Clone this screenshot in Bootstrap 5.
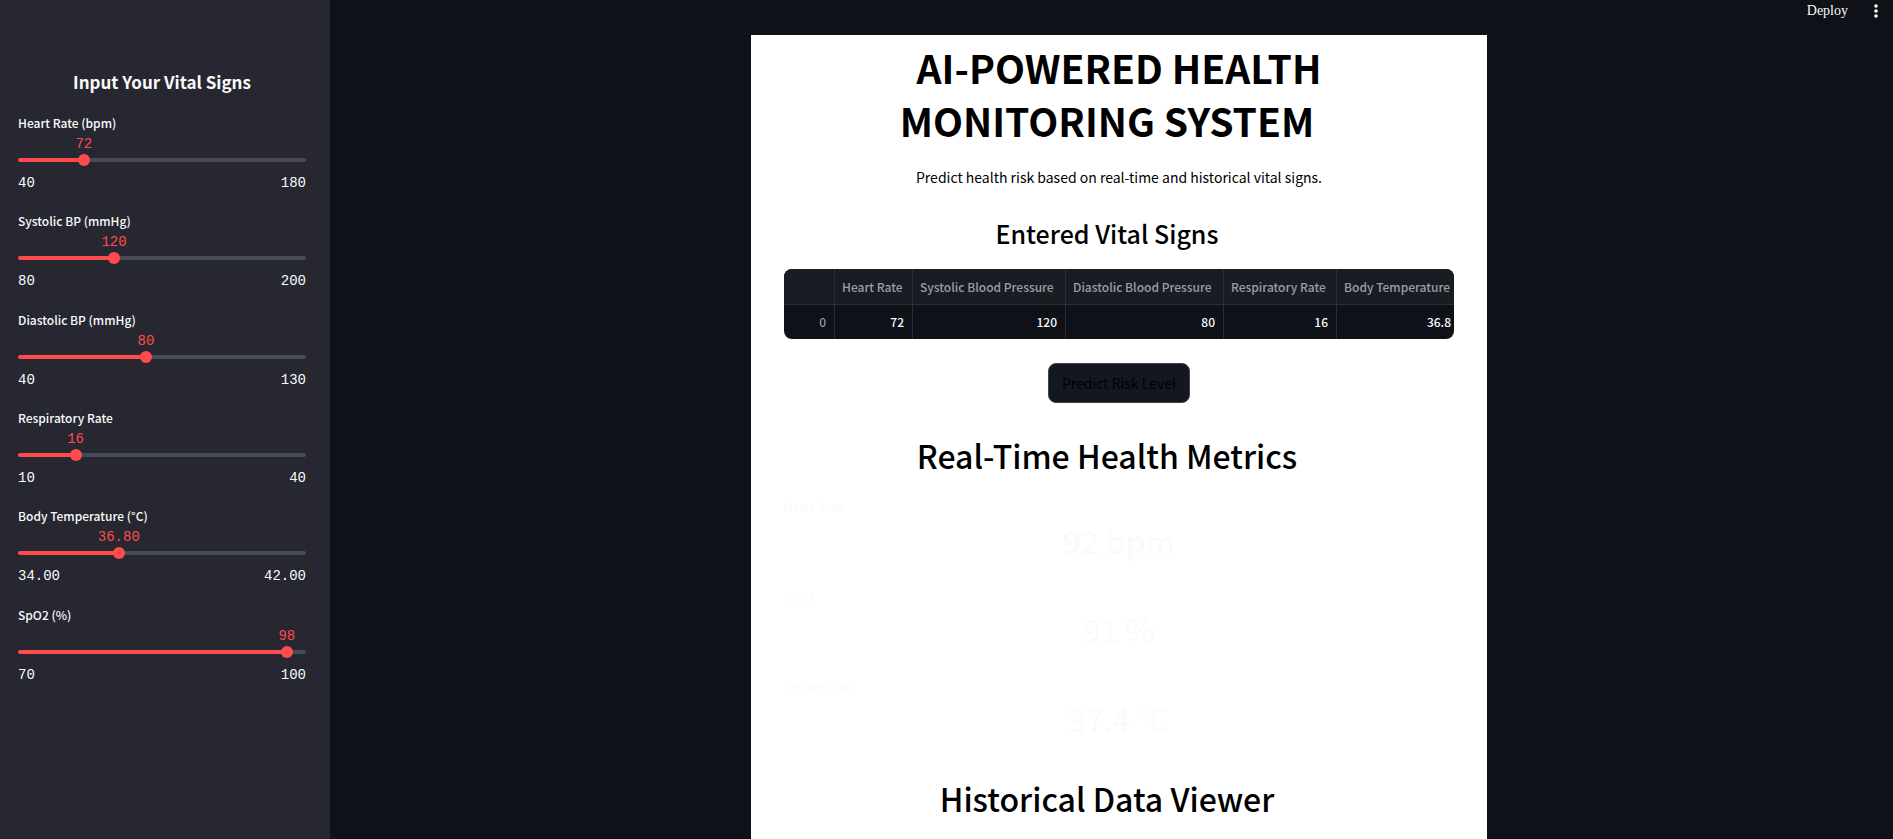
<!DOCTYPE html>
<html lang="en">
<head>
<meta charset="utf-8">
<meta name="viewport" content="width=device-width, initial-scale=1">
<title>AI-Powered Health Monitoring System</title>
<link href="https://cdn.jsdelivr.net/npm/bootstrap@5.3.0/dist/css/bootstrap.min.css" rel="stylesheet">
<style>
  body { background: #0e1117; color: #fafafa; font-family: "Noto Sans CJK SC", "Open Sans", sans-serif; }
  .side-panel { flex: 0 0 330px; background: #262730; padding: 70px 24px 24px 18px; }
  .side-title { font-size: 17px; line-height: 24px; font-weight: 700; margin-bottom: 19px; }
  .slider-list { display: grid; grid-auto-rows: 1fr; min-height: 590px; }
  .slider-label { display: block; font-size: 12px; line-height: 20px; font-weight: 500; }
  .slider-track { height: 4px; margin-top: 25px; border-radius: 2px;
    background: linear-gradient(to right, #ff4b4b var(--fill), #484a55 var(--fill)); }
  .slider-track input { -webkit-appearance: none; appearance: none; position: absolute; top: -4px; left: -6px;
    width: calc(100% + 12px); height: 12px; margin: 0; background: transparent; }
  .slider-track input::-webkit-slider-thumb { -webkit-appearance: none; width: 12px; height: 12px;
    border-radius: 50%; background: #ff4b4b; border: 0; }
  .slider-track output { position: absolute; bottom: 10px; left: var(--fill); transform: translateX(-50%);
    color: #ff4b4b; line-height: 16px; }
  .mono-text { font-family: "Liberation Mono", monospace; font-size: 14px; line-height: 20px; }
  .slider-ends { margin-top: 11px; }

  .main-area { padding-left: 15px; min-width: 0; }
  .top-bar { height: 35px; padding: 0 12px; gap: 23px; }
  .top-bar button { background: none; border: 0; padding: 0; color: #fafafa; line-height: 22px; }
  .deploy-btn { font-family: "Liberation Serif", serif; font-size: 14px; }
  .sheet { width: 100%; max-width: 736px; background: #fff; color: #000; padding: 6px 33px 19px; }
  .sheet h1, .sheet h2, .sheet h3 { margin: 0; }
  .anchor-gap { display: inline-block; width: 24px; }
  .sheet h1 { font-size: 39px; line-height: 53px; font-weight: 700; }
  .sheet .intro { font-size: 14px; line-height: 26px; margin: 17px 0 26px; }
  .sheet h3 { font-size: 25px; line-height: 34px; font-weight: 500; }
  .sheet h2 { font-size: 32px; line-height: 44px; font-weight: 500; }
  .vitals-frame { margin: 19px 0 24px; border-radius: 8px; overflow: hidden; background: #0e1117; }
  .vitals { table-layout: fixed; width: 676px; border-collapse: separate; border-spacing: 0;
    font-size: 12px; line-height: 20px; font-weight: 500; color: #fafafa; }
  .vitals th, .vitals td { height: 34px; padding: 0 8px 0 7px; text-align: right; white-space: nowrap;
    border-right: 1px solid #2c2e34; }
  .vitals th { font-weight: 500; color: #9c9da1; }
  .vitals thead th { height: 36px; background: #1a1c24; border-bottom: 1px solid #2c2e34; text-align: left; }
  .predict-btn { background: #131720; border: 1px solid #41444c; border-radius: 8px; color: #000;
    font-size: 14px; line-height: 26px; padding: 6px 13px; }
  .metrics-title { padding-top: 30px; }
  .metrics dt { font-size: 12px; line-height: 16px; font-weight: 400; color: #fafafa; }
  .metrics dd { font-size: 32px; line-height: 50px; margin: 0 0 23px; text-align: center; color: #fafafa; }
  .metrics { margin: 22px 0 33px; }
</style>
</head>
<body>
<div class="d-flex min-vh-100">
  <aside class="side-panel">
    <h2 class="side-title text-center">Input Your Vital Signs</h2>
    <div class="slider-list">
      <div>
        <label class="slider-label" for="hr">Heart Rate (bpm)</label>
        <div class="slider-track position-relative" style="--fill:22.86%"><output class="mono-text" for="hr">72</output><input type="range" id="hr" min="40" max="180" value="72"></div>
        <div class="slider-ends mono-text d-flex justify-content-between"><span>40</span><span>180</span></div>
      </div>
      <div>
        <label class="slider-label" for="sys">Systolic BP (mmHg)</label>
        <div class="slider-track position-relative" style="--fill:33.33%"><output class="mono-text" for="sys">120</output><input type="range" id="sys" min="80" max="200" value="120"></div>
        <div class="slider-ends mono-text d-flex justify-content-between"><span>80</span><span>200</span></div>
      </div>
      <div>
        <label class="slider-label" for="dia">Diastolic BP (mmHg)</label>
        <div class="slider-track position-relative" style="--fill:44.44%"><output class="mono-text" for="dia">80</output><input type="range" id="dia" min="40" max="130" value="80"></div>
        <div class="slider-ends mono-text d-flex justify-content-between"><span>40</span><span>130</span></div>
      </div>
      <div>
        <label class="slider-label" for="resp">Respiratory Rate</label>
        <div class="slider-track position-relative" style="--fill:20%"><output class="mono-text" for="resp">16</output><input type="range" id="resp" min="10" max="40" value="16"></div>
        <div class="slider-ends mono-text d-flex justify-content-between"><span>10</span><span>40</span></div>
      </div>
      <div>
        <label class="slider-label" for="temp">Body Temperature (°C)</label>
        <div class="slider-track position-relative" style="--fill:35%"><output class="mono-text" for="temp">36.80</output><input type="range" id="temp" min="34" max="42" step="0.1" value="36.8"></div>
        <div class="slider-ends mono-text d-flex justify-content-between"><span>34.00</span><span>42.00</span></div>
      </div>
      <div>
        <label class="slider-label" for="spo2">SpO2 (%)</label>
        <div class="slider-track position-relative" style="--fill:93.33%"><output class="mono-text" for="spo2">98</output><input type="range" id="spo2" min="70" max="100" value="98"></div>
        <div class="slider-ends mono-text d-flex justify-content-between"><span>70</span><span>100</span></div>
      </div>
    </div>
  </aside>

  <div class="main-area flex-grow-1 d-flex flex-column">
    <header class="top-bar d-flex justify-content-end align-items-start">
      <button type="button" class="deploy-btn">Deploy</button>
      <button type="button" class="d-flex" aria-label="Main menu">
        <svg width="10" height="22" viewBox="0 0 10 22" fill="#fafafa" aria-hidden="true"><circle cx="5" cy="6" r="1.8"/><circle cx="5" cy="11" r="1.8"/><circle cx="5" cy="16" r="1.8"/></svg>
      </button>
    </header>
    <main class="sheet mx-auto flex-grow-1">
      <h1 class="text-center">AI-POWERED HEALTH<br>MONITORING SYSTEM<span class="anchor-gap"></span></h1>
      <p class="intro text-center">Predict health risk based on real-time and historical vital signs.</p>
      <h3 class="text-center">Entered Vital Signs<span class="anchor-gap"></span></h3>
      <div class="vitals-frame">
        <table class="vitals">
          <colgroup><col style="width:51px"><col style="width:78px"><col style="width:153px"><col style="width:158px"><col style="width:113px"><col style="width:123px"></colgroup>
          <thead><tr><th></th><th scope="col">Heart Rate</th><th scope="col">Systolic Blood Pressure</th><th scope="col">Diastolic Blood Pressure</th><th scope="col">Respiratory Rate</th><th scope="col">Body Temperature</th></tr></thead>
          <tbody><tr><th scope="row">0</th><td>72</td><td>120</td><td>80</td><td>16</td><td>36.8</td></tr></tbody>
        </table>
      </div>
      <div class="d-flex justify-content-center"><button type="button" class="predict-btn">Predict Risk Level</button></div>
      <h2 class="metrics-title text-center">Real-Time Health Metrics<span class="anchor-gap"></span></h2>
      <dl class="metrics">
        <dt>Heart Rate</dt><dd>92 bpm</dd>
        <dt>SpO2</dt><dd>91 %</dd>
        <dt>Temperature</dt><dd>37.4 °C</dd>
      </dl>
      <h2 class="text-center">Historical Data Viewer<span class="anchor-gap"></span></h2>
    </main>
  </div>
</div>
<script src="https://cdn.jsdelivr.net/npm/bootstrap@5.3.0/dist/js/bootstrap.bundle.min.js"></script>
</body>
</html>
